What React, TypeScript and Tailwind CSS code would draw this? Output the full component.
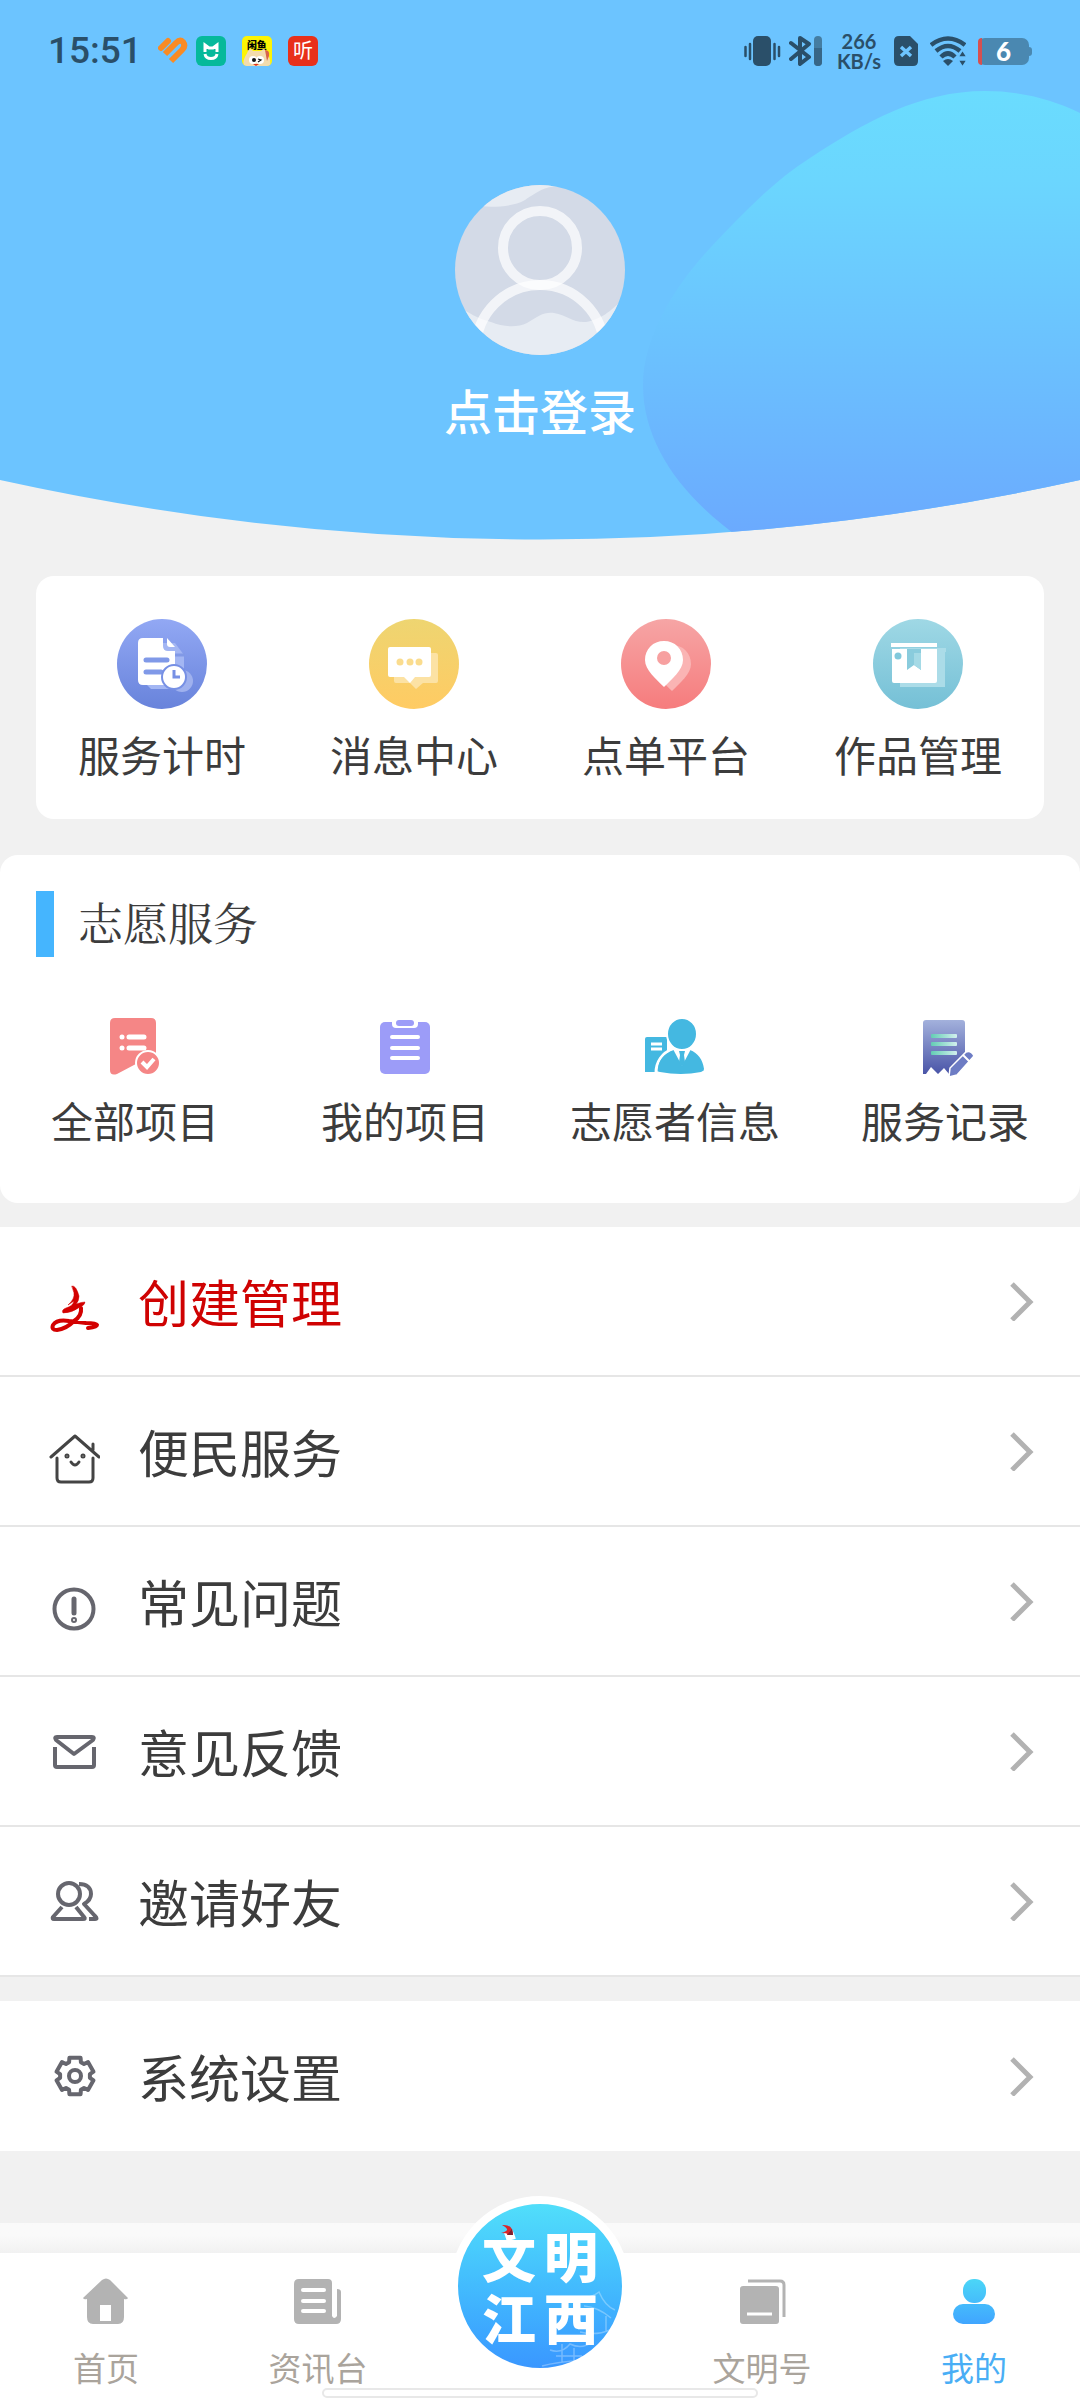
import React from "react";

const INK = "#66666e";

function HeaderBackdrop() {
  return (
    <svg className="absolute inset-0 h-full w-full" viewBox="0 0 1080 540" preserveAspectRatio="none" aria-hidden="true">
      <defs>
        <linearGradient id="blob" x1="0" y1="90" x2="0" y2="540" gradientUnits="userSpaceOnUse">
          <stop offset="0" stopColor="#6adcfe" />
          <stop offset="0.2" stopColor="#6bd6fe" />
          <stop offset="0.6" stopColor="#6bc0fe" />
          <stop offset="1" stopColor="#6ba9fe" />
        </linearGradient>
        <clipPath id="dome">
          <path d="M0 0H1080V480Q540 599 0 480Z" />
        </clipPath>
      </defs>
      <g clipPath="url(#dome)">
        <rect width="1080" height="540" fill="#6cc4ff" />
        <path
          d="M750 545C690 505 643 450 643 385C643 340 672 288 712 246C742 214 775 180 810 158C865 122 920 91 985 91C1020 91 1052 99 1080 113V545Z"
          fill="url(#blob)"
        />
      </g>
    </svg>
  );
}

function Avatar() {
  return (
    <svg className="size-[170px]" viewBox="0 0 170 170" aria-hidden="true">
      <clipPath id="face">
        <circle cx="85" cy="85" r="85" />
      </clipPath>
      <g clipPath="url(#face)">
        <rect width="170" height="170" fill="#d3dae7" />
        <path d="M20 21C34 22 56 23 70 15C84 6 88 2 104 1L80-10L20 0Z" fill="#e7ecf3" />
        <path d="M0 120C14 128 24 134 36 137C48 142 62 143 72 138C84 131 88 127 99 128C112 130 118 138 131 137C146 134 154 128 170 112V170H0Z" fill="#e7ecf3" />
        <circle cx="85" cy="63" r="37" fill="none" stroke="#fff" strokeOpacity="0.7" strokeWidth="10" />
        <circle cx="85" cy="164" r="64" fill="none" stroke="#fff" strokeOpacity="0.7" strokeWidth="10" />
      </g>
    </svg>
  );
}

function StatusBar() {
  const c = "#2a4f69";
  return (
    <div className="relative flex h-[102px] items-center pl-12 pr-12 text-[#2a4f69]">
      <span className="font-['Roboto'] text-[37px] font-medium leading-[40px]">15:51</span>
      <svg className="ml-4 h-[28px] w-[30px]" viewBox="0 0 30 28" aria-hidden="true">
        <g fill="none" stroke="#f98b23" strokeWidth="6">
          <path d="M3 11L10 4" strokeWidth="6" strokeLinecap="round" />
          <path d="M7 17L18 6Q22 2 25 5Q28 9 24 13L13 24" strokeWidth="6" />
        </g>
      </svg>
      <svg className="ml-2 size-[30px]" viewBox="0 0 30 30" aria-hidden="true">
        <rect width="30" height="30" rx="6" fill="#06b99b" />
        <path d="M9 16V9L13 12H17L21 9V16" fill="none" stroke="#fff" strokeWidth="3" />
        <path d="M9 18C10 24 20 24 21 18" fill="none" stroke="#fff" strokeWidth="3" />
      </svg>
      <div className="relative ml-4 size-[30px] overflow-hidden rounded-[5px] bg-[#fdf404] text-center font-['Noto_Sans_CJK_SC',sans-serif] text-[10px] font-black leading-[17px] text-black">
        闲鱼
        <svg className="absolute inset-0 size-[30px]" viewBox="0 0 30 30" aria-hidden="true">
          <path d="M2 30C0 24 4 20 6 15Q8 11 11 15H19Q22 11 24 15C27 20 29 24 28 30Z" fill="#f3dcae" />
          <path d="M23 14Q28 14 27 20L25 25Z" fill="#d8644a" />
          <circle cx="11" cy="24" r="4" fill="#fff" />
          <circle cx="18" cy="24" r="4" fill="#fff" />
          <circle cx="12" cy="24" r="2" fill="#111" />
          <path d="M16 23L19 24L16 26" stroke="#111" strokeWidth="1.2" fill="none" />
          <path d="M11 28H17L14 30Z" fill="#e0311d" />
        </svg>
      </div>
      <div className="ml-4 size-[30px] rounded-[6px] bg-[#e8301a] text-center font-['Noto_Sans_CJK_SC',sans-serif] text-[20px] leading-[28px] text-white">听</div>

      <div className="ml-auto flex items-center">
        <svg className="h-[30px] w-[37px]" viewBox="0 0 37 30" aria-hidden="true">
          <rect x="9" width="18" height="30" rx="5" fill={c} />
          <path d="M1.500 11V20M6 8V23M30.500 8V23M35 11V20" stroke={c} strokeWidth="2.500" strokeLinecap="round" />
        </svg>
        <svg className="ml-2 h-[30px] w-[33px]" viewBox="0 0 33 30" aria-hidden="true">
          <path d="M2 7L20 21L11 28V2L20 8L2 23" fill="none" stroke={c} strokeWidth="4" strokeLinecap="round" strokeLinejoin="round" />
          <rect x="25" width="8" height="30" rx="4" fill="#447da2" />
          <path d="M25 12H33V26A4 4 0 0 1 25 26Z" fill="#376687" />
        </svg>
        <div className="ml-[14px] flex w-[46px] flex-col items-center font-['Lato'] text-[20px] font-bold leading-[20px]">
          <span>266</span>
          <span>KB/s</span>
        </div>
        <svg className="ml-3 h-[30px] w-[24px]" viewBox="0 0 24 30" aria-hidden="true">
          <path d="M5 0H16L24 8V25Q24 30 19 30H5Q0 30 0 25V5Q0 0 5 0Z" fill={c} />
          <path d="M7 11L17 20M17 11L7 20" stroke="#6cc4ff" strokeWidth="3.500" />
        </svg>
        <svg className="ml-3 h-[30px] w-[36px]" viewBox="0 0 36 30" aria-hidden="true">
          <g fill="none" stroke={c} strokeWidth="4.500">
            <path d="M1 9Q18 -4 35 9" />
            <path d="M6 15Q18 5 30 15" />
            <path d="M11 21Q18 14 25 21" />
          </g>
          <path d="M13 25Q18 21 23 25L18 30Z" fill={c} />
          <path d="M28 21H37L32.500 14ZM28 24H37L32.500 31Z" fill={c} stroke="#6cc4ff" strokeWidth="1.500" />
        </svg>
        <div className="relative ml-3 flex h-[27px] w-[51px] items-center justify-center rounded-[7px] bg-[#4a88b1] font-['Lato'] text-[26px] font-black leading-[27px] text-white">
          <span className="absolute inset-y-0 left-0 w-1 rounded-l-[4px] bg-[#d65050]" />
          <span>6</span>
        </div>
        <span className="h-[9px] w-[3px] rounded-r bg-[#4a88b1]" />
      </div>
    </div>
  );
}

function Disc({ id, from, to, children }: { id: string; from: string; to: string; children: React.ReactNode }) {
  return (
    <svg className="size-[90px]" viewBox="0 0 90 90" aria-hidden="true">
      <linearGradient id={id} x1="0" y1="0" x2="0" y2="1">
        <stop offset="0" stopColor={from} />
        <stop offset="1" stopColor={to} />
      </linearGradient>
      <circle cx="45" cy="45" r="45" fill={`url(#${id})`} />
      {children}
    </svg>
  );
}

const pinPath = "M43 22C32 22 24 30 24 41C24 51 35 60 43 68C51 60 62 51 62 41C62 30 54 22 43 22Z";

const shortcuts = [
  {
    label: "服务计时",
    icon: (
      <Disc id="d1" from="#92a8f4" to="#6883db">
        <path d="M32 24H58L67 36V58L60 70H34L30 66Z" fill="#a3b6f3" />
        <path d="M57 36H68" stroke="#8199e6" strokeWidth="3" />
        <circle cx="65" cy="62" r="11" fill="#9fb1ee" />
        <path d="M26 19H46V27Q46 32 51 32H58V66H26Q21 66 21 61V24Q21 19 26 19Z" fill="#fff" />
        <path d="M50 19L58 28H53Q50 28 50 25Z" fill="#fff" />
        <path d="M29 41H50M29 53H44" stroke="#8099e8" strokeWidth="5" strokeLinecap="round" />
        <circle cx="57" cy="58" r="12" fill="#fff" stroke="#7790e4" strokeWidth="2" />
        <path d="M57 51V58H63" fill="none" stroke="#7790e4" strokeWidth="3" />
      </Disc>
    ),
  },
  {
    label: "消息中心",
    icon: (
      <Disc id="d2" from="#eed571" to="#ffcb63">
        <path d="M27 34H67Q69 34 69 36V62Q69 64 67 64H54L47 70L41 64H27Q25 64 25 62V36Q25 34 27 34Z" fill="#fce2a4" />
        <path d="M21 28H60Q62 28 62 30V56Q62 58 60 58H46L41 64L35 58H21Q19 58 19 56V30Q19 28 21 28Z" fill="#fff" />
        <circle cx="31" cy="43" r="3.500" fill="#fadc8e" />
        <circle cx="41" cy="43" r="3.500" fill="#fadc8e" />
        <circle cx="50" cy="43" r="3.500" fill="#fadc8e" />
      </Disc>
    ),
  },
  {
    label: "点单平台",
    icon: (
      <Disc id="d3" from="#f6a5a5" to="#f67c7d">
        <path d={pinPath} transform="translate(8 4)" fill="#fab4b4" />
        <path d={pinPath} fill="#fff" />
        <circle cx="43" cy="39" r="7" fill="#f7a0a0" />
      </Disc>
    ),
  },
  {
    label: "作品管理",
    icon: (
      <Disc id="d4" from="#9fd8e5" to="#75c0d6">
        <path d="M27 29H73V33H72V68H27Z" fill="#abdce8" />
        <rect x="18" y="24" width="46" height="4" fill="#fff" />
        <path d="M19 30H64V62Q64 64 62 64H21Q19 64 19 62Z" fill="#fff" />
        <path d="M34 30H48V51L41 46L34 51Z" fill="#8accdd" />
        <path d="M41 34H48V51L41 46Z" fill="#a5dae6" />
        <circle cx="25" cy="37" r="3.500" fill="#82c9dc" />
      </Disc>
    ),
  },
];

const volunteer = [
  {
    label: "全部项目",
    icon: (
      <svg className="h-16 w-[60px]" viewBox="0 0 60 64" aria-hidden="true">
        <path d="M10 2H46Q51 2 51 7V47H33L29 49L12 58Q5 60 5 54V7Q5 2 10 2Z" fill="#f58686" />
        <circle cx="17" cy="21" r="2.500" fill="#fff" />
        <circle cx="17" cy="32" r="2.500" fill="#fff" />
        <path d="M24 21H39M24 32H39" stroke="#fff" strokeWidth="5" strokeLinecap="round" />
        <circle cx="43" cy="47" r="12" fill="#f58686" stroke="#fff" strokeWidth="2" />
        <path d="M37 46L42 51L49 43" fill="none" stroke="#fff" strokeWidth="4" />
      </svg>
    ),
  },
  {
    label: "我的项目",
    icon: (
      <svg className="h-16 w-[60px]" viewBox="0 0 60 64" aria-hidden="true">
        <rect x="5" y="6" width="50" height="52" rx="5" fill="#9c9cf8" />
        <path d="M17 5H43V8Q43 12 39 12H21Q17 12 17 8Z" fill="#fff" />
        <rect x="21" y="4" width="18" height="6" rx="3" fill="#9c9cf8" />
        <path d="M17 21H43M17 32H43M17 42H43" stroke="#fff" strokeWidth="4" strokeLinecap="round" />
      </svg>
    ),
  },
  {
    label: "志愿者信息",
    icon: (
      <svg className="h-16 w-[60px]" viewBox="0 0 60 64" aria-hidden="true">
        <path d="M2 21H22V56H0V23Q0 21 2 21Z" fill="#44b8e1" />
        <path d="M6 28H17M6 33H17" stroke="#fff" strokeWidth="3" />
        <path d="M11 57C11 46 17 37 28 33H45C54 37 60 46 60 56Z" fill="#44b8e1" stroke="#fff" strokeWidth="3" />
        <path d="M13 54C13 45 19 37 29 34H45C53 37 58 44 59 53Q59 55 56 56Q36 60 15 56Q13 56 13 54Z" fill="#44b8e1" />
        <path d="M28 33H46L37 50Z" fill="#fff" />
        <path d="M34 35H40L39 39L40 46L37 51L34 46L35 39Z" fill="#44b8e1" />
        <ellipse cx="37" cy="18" rx="15" ry="16" fill="#44b8e1" stroke="#fff" strokeWidth="2" />
      </svg>
    ),
  },
  {
    label: "服务记录",
    icon: (
      <svg className="h-16 w-[60px]" viewBox="0 0 60 64" aria-hidden="true">
        <linearGradient id="receipt" x1="0" y1="0" x2="0" y2="1">
          <stop offset="0" stopColor="#a3b1dc" />
          <stop offset="1" stopColor="#4a55a8" />
        </linearGradient>
        <linearGradient id="mint" x1="16" y1="0" x2="42" y2="0" gradientUnits="userSpaceOnUse">
          <stop offset="0" stopColor="#63cdb4" />
          <stop offset="1" stopColor="#d3f0ee" />
        </linearGradient>
        <path d="M11 4H47Q50 4 50 7V46L34 58L29 52L23 58L16 51L11 58H8V7Q8 4 11 4Z" fill="url(#receipt)" />
        <g fill="url(#mint)">
          <rect x="16" y="18" width="26" height="4" rx="1" />
          <rect x="16" y="26" width="26" height="4" rx="1" />
          <rect x="16" y="35" width="26" height="4" rx="1" />
        </g>
        <path d="M34 61L35 52L51 36Q56 34 59 40L42 59Z" fill="#6d7cc4" stroke="#fff" strokeWidth="1.500" />
        <path d="M48 39L55 46" stroke="#fff" strokeWidth="2" />
      </svg>
    ),
  },
];

const gearPath = (() => {
  const pts: string[] = [];
  for (let i = 0; i < 6; i++) {
    for (const [da, r] of [[-23, 15], [-17, 19], [17, 19], [23, 15]]) {
      const a = ((i * 60 + da - 90) * Math.PI) / 180;
      pts.push(`${(27 + r * Math.cos(a)).toFixed(1)} ${(33 + r * Math.sin(a)).toFixed(1)}`);
    }
  }
  return `M${pts.join("L")}Z`;
})();

function RowIcon({ stroke = INK, width = 4, children }: { stroke?: string; width?: number; children: React.ReactNode }) {
  return (
    <svg
      className="h-[66px] w-[52px]"
      viewBox="0 0 52 66"
      fill="none"
      stroke={stroke}
      strokeWidth={width}
      strokeLinecap="round"
      strokeLinejoin="round"
      aria-hidden="true"
    >
      {children}
    </svg>
  );
}

const rows = [
  {
    label: "创建管理",
    red: true,
    icon: (
      <RowIcon stroke="#d30000" width={2}>
        <path d="M24 18Q28 17 31 28Q31 33 28 36Q34 34 37 34Q37 37 32 39Q24 45 15 45Q13 42 18 40Q25 38 26 33Q23 35 20 37Q27 31 26 25Z" fill="#d30000" strokeWidth="0.500" />
        <path
          d="M33 40Q34 48 26 53Q18 61 9 62Q3 62 5 57Q9 51 21 53Q30 54 38 55Q48 55 49 57Q49 59 40 60"
          strokeWidth="4"
        />
      </RowIcon>
    ),
  },
  {
    label: "便民服务",
    icon: (
      <RowIcon stroke="#444" width={3}>
        <path d="M3 39L27 18L51 39M45 26V32M9 40V60Q9 64 13 64H41Q45 64 45 60V40" />
        <circle cx="19" cy="38" r="1" />
        <circle cx="35" cy="38" r="1" />
        <path d="M23 44Q27 50 31 44" />
      </RowIcon>
    ),
  },
  {
    label: "常见问题",
    icon: (
      <RowIcon>
        <circle cx="26" cy="41" r="19.500" />
        <path d="M26 31V45" strokeWidth="5" />
        <circle cx="26" cy="52" r="1" />
      </RowIcon>
    ),
  },
  {
    label: "意见反馈",
    icon: (
      <RowIcon>
        <path d="M7 29V47Q7 49 9 49H44Q46 49 46 47V29" strokeLinecap="butt" />
        <path d="M9 19H44Q47 19 45 22L26 36L8 22Q6 19 9 19Z" />
      </RowIcon>
    ),
  },
  {
    label: "邀请好友",
    icon: (
      <RowIcon>
        <circle cx="21" cy="26" r="11" />
        <path d="M14 39L5 49Q4 51 6 51H35Q38 51 36 49L28 39" strokeLinecap="butt" />
        <path d="M31 16C39 16 43 20 43 26Q43 32 36 36L47 48Q50 51 47 51H41" strokeLinecap="butt" />
      </RowIcon>
    ),
  },
];

const settingsRow = {
  label: "系统设置",
  icon: (
    <RowIcon>
      <path d={gearPath} />
      <circle cx="27" cy="33" r="6" />
    </RowIcon>
  ),
};

function Row({ label, icon, red, last }: { label: string; icon: React.ReactNode; red?: boolean; last?: boolean }) {
  return (
    <button
      type="button"
      className={`flex h-[150px] w-full items-center bg-white pl-12 pr-[46px] text-left ${last ? "" : "border-b-2 border-[#e6e6e6]"}`}
    >
      {icon}
      <span className={`ml-[38px] flex-1 text-[51px] leading-[60px] ${red ? "text-[#cf0202]" : "text-[#3c3c3c]"}`}>{label}</span>
      <svg className="h-10 w-6" viewBox="0 0 24 40" fill="none" stroke="#b2b2b2" strokeWidth="5" aria-hidden="true">
        <path d="M2 3L20 21L2 39" />
      </svg>
    </button>
  );
}

const tabs = [
  {
    label: "首页",
    icon: (
      <svg className="size-12" viewBox="0 0 48 48" aria-hidden="true">
        <path d="M20 3Q24 0 28 3L46 21Q45 23 42 22V40Q42 47 36 47H11Q5 47 5 40V22Q2 23 1 21Z" fill="#b3b3b3" />
        <rect x="18" y="28" width="11" height="16" fill="#fff" />
      </svg>
    ),
  },
  {
    label: "资讯台",
    icon: (
      <svg className="size-12" viewBox="0 0 48 48" aria-hidden="true">
        <path d="M5 2H34Q38 2 38 6V39Q40 43 43 39V12Q47 12 47 15V42Q47 47 42 47H5Q0 47 0 42V7Q0 2 5 2Z" fill="#b3b3b3" />
        <path d="M9 13H30M9 24H30M9 34H30" stroke="#fff" strokeWidth="4" strokeLinecap="round" />
      </svg>
    ),
  },
  null,
  {
    label: "文明号",
    icon: (
      <svg className="size-12" viewBox="0 0 48 48" aria-hidden="true">
        <rect x="2" y="9" width="39" height="38" rx="3" fill="#b3b3b3" />
        <path d="M10 4H42Q46 4 46 8V40" fill="none" stroke="#b3b3b3" strokeWidth="3" />
        <path d="M9 37H34" stroke="#fff" strokeWidth="3" />
      </svg>
    ),
  },
  {
    label: "我的",
    active: true,
    icon: (
      <svg className="size-12" viewBox="0 0 48 48" aria-hidden="true">
        <linearGradient id="me" x1="0" y1="2" x2="0" y2="47" gradientUnits="userSpaceOnUse">
          <stop offset="0" stopColor="#4bd6f7" />
          <stop offset="1" stopColor="#40a5ff" />
        </linearGradient>
        <rect x="13" y="2" width="23" height="24" rx="11" fill="url(#me)" />
        <rect x="3" y="27" width="42" height="20" rx="10" fill="url(#me)" />
      </svg>
    ),
  },
];

function CenterLogo() {
  return (
    <button
      type="button"
      className="absolute -top-[57px] left-1/2 size-[180px] -translate-x-1/2 rounded-full border-8 border-white bg-linear-to-b from-[#51defa] to-[#3a97ff]"
    >
      <svg className="absolute inset-0 h-full w-full" viewBox="0 0 164 164" aria-hidden="true">
        <g fill="none" stroke="#fff" strokeOpacity="0.300" strokeWidth="1.500">
          <path d="M118 95Q134 94 141 88Q147 102 157 106M126 102Q140 103 153 114M134 110V130M148 112V128M122 128Q138 132 152 126" />
          <path d="M92 146Q104 150 112 140Q124 146 134 138M98 152H124M104 140V158M116 144V158M84 162Q98 158 126 156" />
        </g>
      </svg>
      <span className="relative grid grid-cols-[62px_62px] justify-center text-center font-['Noto_Sans_CJK_SC',sans-serif] text-[54px] font-black leading-[62px] text-white">
        <span>文</span>
        <span>明</span>
        <span>江</span>
        <span>西</span>
      </span>
      <svg className="absolute left-[41px] top-[20px] h-3 w-4" viewBox="0 0 16 12" aria-hidden="true">
        <path d="M3 1Q14 0 14 11L8 11Q10 9 2 9Q9 7 8 5Q7 3 3 1Z" fill="#d9262c" />
        <path d="M13 5L14 11L8 11Z" fill="#7d2130" />
      </svg>
    </button>
  );
}

export default function App() {
  return (
    <div className="flex min-h-screen w-full flex-col bg-[#f1f1f1] font-['Noto_Sans_CJK_SC',sans-serif] text-[#3c3c3c]">
      <header className="relative h-[540px]">
        <HeaderBackdrop />
        <StatusBar />
        <button type="button" className="relative mx-auto mt-[83px] flex flex-col items-center">
          <Avatar />
          <span className="mt-6 text-[48px] font-medium leading-[60px] text-white">点击登录</span>
        </button>
      </header>

      <section className="mx-9 mt-9 grid grid-cols-4 rounded-[18px] bg-white pb-[35px] pt-[43px]">
        {shortcuts.map((s) => (
          <button key={s.label} type="button" className="flex flex-col items-center">
            {s.icon}
            <span className="mt-[15px] text-[42px] leading-[60px]">{s.label}</span>
          </button>
        ))}
      </section>

      <section className="mt-9 rounded-[18px] bg-white pb-[53px] pt-9">
        <h2 className="flex items-center font-['Noto_Serif_CJK_SC','Liberation_Serif','Noto_Sans_CJK_SC',serif] text-[45px] font-normal leading-[62px]">
          <span className="ml-9 mr-6 h-[66px] w-[18px] bg-[#45b5fe]" />
          <span className="pb-1">志愿服务</span>
        </h2>
        <div className="mt-[59px] grid grid-cols-4">
          {volunteer.map((v) => (
            <button key={v.label} type="button" className="flex flex-col items-center">
              {v.icon}
              <span className="mt-[10px] text-[42px] leading-[60px]">{v.label}</span>
            </button>
          ))}
        </div>
      </section>

      <section className="mt-6">
        {rows.map((r) => (
          <Row key={r.label} {...r} />
        ))}
      </section>
      <section className="mb-[72px] mt-6">
        <Row {...settingsRow} last />
      </section>

      <footer className="mt-auto">
        <div className="h-[30px] bg-linear-to-b from-[#fafafa] from-40% to-[#f1f1f1]" />
        <nav className="relative flex bg-white pb-2 pt-6">
          {tabs.map((t) =>
            t ? (
              <button
                key={t.label}
                type="button"
                className={`flex flex-1 flex-col items-center text-[33px] leading-[50px] ${t.active ? "text-[#49aef5]" : "text-[#aaa49c]"}`}
              >
                {t.icon}
                <span className="mt-[17px]">{t.label}</span>
              </button>
            ) : (
              <div key="center" className="w-[232px]" />
            )
          )}
          <CenterLogo />
          <div className="absolute bottom-[2px] left-1/2 h-[10px] w-[436px] -translate-x-1/2 rounded-full border-2 border-[#e8e8e8] bg-white" />
        </nav>
      </footer>
    </div>
  );
}
